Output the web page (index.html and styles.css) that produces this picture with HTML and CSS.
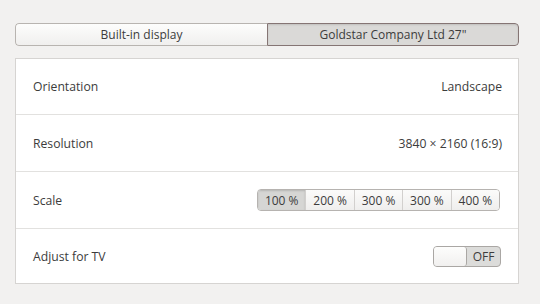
FILE: index.html
```html
<!DOCTYPE html>
<html lang="en">
<head>
    <meta charset="UTF-8">
    <title>Displays</title>
    <link rel="stylesheet" href="styles.css">
</head>
<body>
    <div class="tabs">
        <div class="tab">Built-in display</div>
        <div class="tab active">Goldstar Company Ltd 27"</div>
    </div>
    <div class="panel">
        <div class="row r1">
            <span class="label">Orientation</span>
            <span class="value">Landscape</span>
        </div>
        <div class="row">
            <span class="label">Resolution</span>
            <span class="value">3840 × 2160 (16:9)</span>
        </div>
        <div class="row">
            <span class="label">Scale</span>
            <div class="scale">
                <div class="opt on">100 %</div>
                <div class="opt">200 %</div>
                <div class="opt">300 %</div>
                <div class="opt">300 %</div>
                <div class="opt">400 %</div>
            </div>
        </div>
        <div class="row last">
            <span class="label">Adjust for TV</span>
            <div class="switch">
                <div class="knob"></div>
                <div class="state">OFF</div>
            </div>
        </div>
    </div>
</body>
</html>
```

FILE: styles.css
```css
body {
    margin: 0;
    padding: 23px 21px 0 15px;
    background: #f2f1f0;
    font-family: "Open Sans", "DejaVu Sans", sans-serif;
    color: #3c3c3c;
    font-size: 12px;
}
.tabs {
    display: flex;
    height: 23px;
    border-radius: 4px;
    overflow: hidden;
}
.tab {
    flex: 0 0 252px;
    box-sizing: border-box;
    display: flex;
    align-items: center;
    justify-content: center;
    background: linear-gradient(#fdfdfc, #f0efee);
    border: 1px solid #b8b4b0;
    border-right: none;
    border-radius: 4px 0 0 4px;
}
.tab.active {
    flex: 1;
    background: #dad9d7;
    border: 1px solid #857574;
    border-radius: 0 4px 4px 0;
    box-shadow: inset 0 1px 2px rgba(0, 0, 0, 0.12);
}
.panel {
    margin-top: 12px;
    background: #fff;
    border: 1px solid #d6d4d2;
}
.row {
    display: flex;
    align-items: center;
    justify-content: space-between;
    height: 56px;
    padding: 0 16px 0 17px;
    border-top: 1px solid #e2e1df;
    font-size: 12.2px;
}
.r1 {
    height: 55px;
    border-top: none;
}
.last {
    height: 54px;
}
.scale {
    display: flex;
    width: 243px;
    height: 22px;
    box-sizing: border-box;
    border: 1px solid #b6b3b0;
    border-radius: 4px;
    overflow: hidden;
    margin-right: 2px;
}
.opt {
    flex: 1;
    display: flex;
    align-items: center;
    justify-content: center;
    background: linear-gradient(#fbfbfa, #efeeed);
    border-left: 1px solid #d2d0ce;
    font-size: 12px;
}
.opt:first-child {
    border-left: none;
}
.opt.on {
    background: #d6d6d4;
    box-shadow: inset 0 1px 2px rgba(0, 0, 0, 0.15);
}
.switch {
    display: flex;
    width: 66px;
    height: 19px;
    border: 1px solid #aaa7a4;
    border-radius: 4px;
    background: #dcdcda;
    overflow: hidden;
    margin-right: 1px;
}
.knob {
    width: 32px;
    background: linear-gradient(#fdfdfc, #f1f0ef);
    border-right: 1px solid #aaa7a4;
    border-radius: 0 3px 3px 0;
}
.state {
    flex: 1;
    display: flex;
    align-items: center;
    justify-content: center;
    font-size: 12px;
}
```
